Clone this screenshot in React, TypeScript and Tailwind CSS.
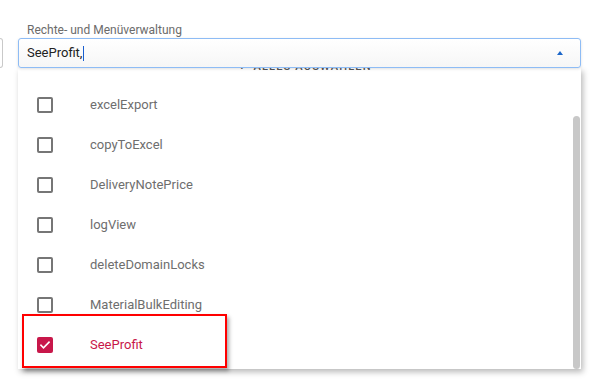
import React from 'react'

const items = [
  { label: 'excelExport', checked: false },
  { label: 'copyToExcel', checked: false },
  { label: 'DeliveryNotePrice', checked: false },
  { label: 'logView', checked: false },
  { label: 'deleteDomainLocks', checked: false },
  { label: 'MaterialBulkEditing', checked: false },
  { label: 'SeeProfit', checked: true },
]

function Checkbox({ checked }: { checked: boolean }) {
  if (checked) {
    return (
      <div className="flex h-[16px] w-[16px] items-center justify-center rounded-[2px] bg-[#c8174a]">
        <svg width="12" height="12" viewBox="0 0 24 24" fill="none">
          <path d="M4 12.5l5 5L20 6.5" stroke="#fff" strokeWidth="3.2" strokeLinecap="square" />
        </svg>
      </div>
    )
  }
  return <div className="h-[16px] w-[16px] rounded-[2px] border-2 border-[#767676]" />
}

export default function App() {
  return (
    <div className="relative h-[384px] w-[595px] overflow-hidden bg-white font-['Roboto',sans-serif]">
      <div className="flex pt-[22px]">
        <div className="mt-[16px] h-[30px] w-[3px] rounded-r-[3px] border-y border-r border-[#c9c9c9]" />
        <div className="ml-[15px] flex w-[563px] flex-col">
          <div className="pl-[9px] text-[12px] leading-[16px] text-[#6b6b6b]">Rechte- und Menüverwaltung</div>
          <div className="relative z-10 flex h-[30px] items-center rounded-[3px] border border-[#8ebcf5] bg-[linear-gradient(180deg,#ffffff,#f6f6f6)] pl-[8px] pr-[17px] shadow-[0_1px_3px_rgba(0,0,0,0.12)]">
            <span className="text-[13px] text-[#222]">SeeProfit,</span>
            <span className="ml-[1px] h-[15px] w-[1px] bg-[#1a5fd0]" />
            <div className="flex-1" />
            <div className="h-0 w-0 border-x-[3.5px] border-b-[4px] border-x-transparent border-b-[#1b66c9]" />
          </div>
          <div className="relative flex h-[301px] flex-col bg-white shadow-[2px_3px_6px_rgba(0,0,0,0.28)]">
            <div className="flex h-[4px] items-end justify-center overflow-hidden pl-[12px]">
              <span className="text-[11px] font-medium leading-[11px] tracking-[1.2px] text-[#555]">✓ ALLES AUSWÄHLEN</span>
            </div>
            <div className="mt-[13px] flex flex-col">
              {items.map((it) => (
                <div key={it.label} className="flex h-[40px] items-center">
                  <div className="ml-[19px] w-[53px]">
                    <Checkbox checked={it.checked} />
                  </div>
                  <span className={`text-[13px] ${it.checked ? 'text-[#c8174a]' : 'text-[#6e6e6e]'}`}>{it.label}</span>
                </div>
              ))}
            </div>
            <div className="absolute right-[1px] top-[48px] h-[253px] w-[7px] rounded-[4px] bg-[#c8c8c8]" />
          </div>
        </div>
      </div>
      <div className="absolute left-[22px] top-[314px] h-[54px] w-[205px] border-2 border-[#f00] shadow-[2px_3px_4px_rgba(0,0,0,0.35)]" />
    </div>
  )
}
